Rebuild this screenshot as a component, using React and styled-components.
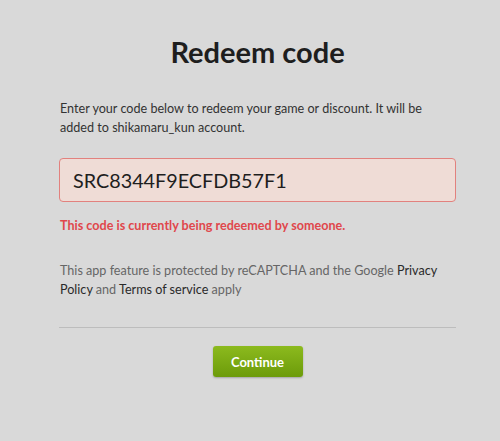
import React, { useState } from "react";
import styled, { createGlobalStyle } from "styled-components";

const GlobalStyle = createGlobalStyle`
  html, body {
    margin: 0;
    padding: 0;
    background: #d9d9d9;
    font-family: Lato, "Open Sans", sans-serif;
  }
`;

const App = () => {
  const [code, setCode] = useState("SRC8344F9ECFDB57F1");

  return (
    <>
      <GlobalStyle />
      <StPage>
        <StCard>
          <StTitle>Redeem code</StTitle>
          <StIntro>
            Enter your code below to redeem your game or discount. It will be
            added to shikamaru_kun account.
          </StIntro>
          <StCodeInput
            $invalid
            value={code}
            onChange={(e) => setCode(e.target.value)}
          />
          <StError>This code is currently being redeemed by someone.</StError>
          <StNotice>
            This app feature is protected by reCAPTCHA and the Google{" "}
            <StLink href="#">Privacy Policy</StLink> and{" "}
            <StLink href="#">Terms of service</StLink> apply
          </StNotice>
          <StDivider />
          <StActions>
            <StButton>Continue</StButton>
          </StActions>
        </StCard>
      </StPage>
    </>
  );
};

export default App;

const StPage = styled.div`
  min-height: 441px;
  padding: 0 44px 0 59px;
  box-sizing: border-box;
`;

const StCard = styled.div`
  display: flex;
  flex-direction: column;
  padding-top: 33px;
`;

const StTitle = styled.h1`
  margin: 0;
  text-align: center;
  font-size: 29px;
  font-weight: 700;
  line-height: 38px;
  color: #1e1e1e;
`;

const StIntro = styled.p`
  margin: 28px 0 0 1px;
  font-size: 12.6px;
  line-height: 19px;
  color: #333;
`;

const StCodeInput = styled.input`
  margin-top: 21px;
  height: 44px;
  box-sizing: border-box;
  padding: 0 13px;
  border: 1px solid ${(p) => (p.$invalid ? "#e2817e" : "#bbb")};
  border-radius: 4px;
  background: ${(p) => (p.$invalid ? "#efdcd6" : "#fff")};
  font-family: inherit;
  font-size: 19.8px;
  color: #1e1e1e;
  outline: none;
`;

const StError = styled.p`
  margin: 15px 0 0 1px;
  font-size: 12.6px;
  font-weight: 700;
  line-height: 18px;
  color: #e0474c;
`;

const StNotice = styled.p`
  margin: 26px 0 0 1px;
  font-size: 12.6px;
  line-height: 19px;
  color: #666;
`;

const StLink = styled.a`
  color: #2a2a2a;
  text-decoration: none;
`;

const StDivider = styled.hr`
  margin: 28px 0 0;
  border: none;
  border-top: 1px solid #bdbdbd;
`;

const StActions = styled.div`
  display: flex;
  justify-content: center;
  padding-top: 18px;
`;

const StButton = styled.button`
  width: 90px;
  height: 31px;
  border: none;
  border-radius: 3px;
  background: linear-gradient(#8cba1e, #6c9b0a);
  box-shadow: 0 1px 2px rgba(0, 0, 0, 0.25);
  color: #fff;
  font-family: inherit;
  font-size: 13px;
  font-weight: 700;
  cursor: pointer;
`;
